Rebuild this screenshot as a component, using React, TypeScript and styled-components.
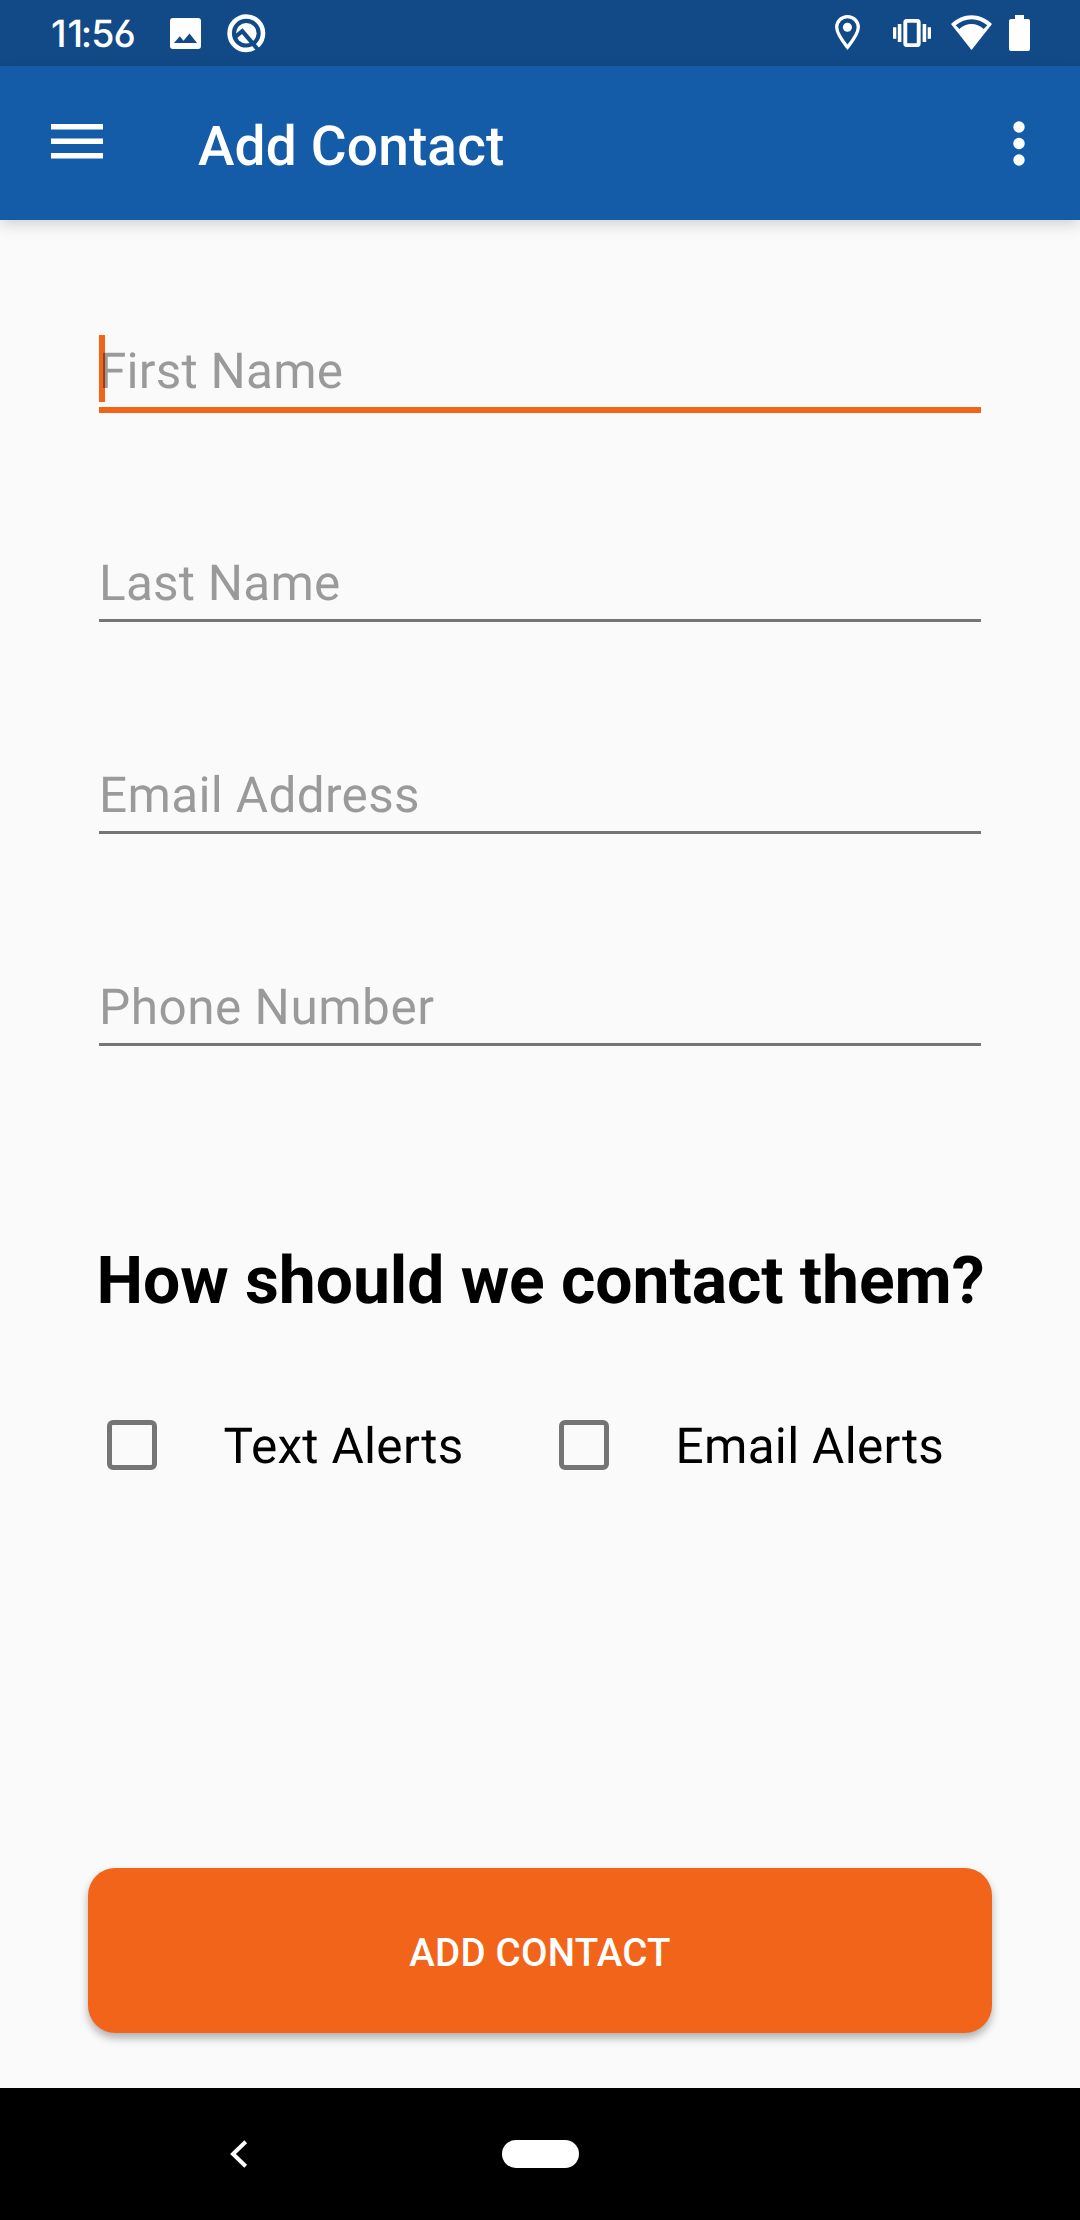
import React from "react";
import styled, { createGlobalStyle } from "styled-components";

const GlobalStyle = createGlobalStyle`
  * { box-sizing: border-box; }
  body {
    margin: 0;
    background: #fafafa;
    font-family: Roboto, "Noto Sans", sans-serif;
    text-rendering: geometricPrecision;
  }
`;

const Screen = styled.div`
  display: flex;
  flex-direction: column;
  width: 1080px;
  height: 2220px;
  overflow: hidden;
  background: #fafafa;
  color: #000;
`;

const StatusBar = styled.header`
  display: flex;
  align-items: center;
  flex: none;
  height: 66px;
  padding: 0 50px 0 51px;
  background: #114a87;
  color: #fff;
`;

const Clock = styled.div`
  width: 119px;
  padding-top: 2px;
  font: 500 37.5px/45px Inter, Roboto, sans-serif;
  font-feature-settings: "cv03", "calt" 0;
  white-space: nowrap;
`;

const Digit = styled.span<{ $tracking: number }>`
  letter-spacing: ${(p) => p.$tracking}px;
`;

const StatusIcon = styled.svg<{ $gap?: number }>`
  display: block;
  flex: none;
  margin-left: ${(p) => p.$gap ?? 0}px;
`;

const Spacer = styled.div`
  flex: 1;
`;

const AppBar = styled.div`
  display: flex;
  align-items: center;
  flex: none;
  height: 154px;
  padding: 0 55px 0 51px;
  background: #155ca8;
  color: #fff;
  box-shadow: 0 4px 14px rgba(0, 0, 0, 0.17);
`;

const IconButton = styled.button`
  display: flex;
  padding: 0;
  border: 0;
  background: none;
  color: inherit;
`;

const Title = styled.h1`
  flex: 1;
  margin: 0 0 0 95px;
  padding-top: 7px;
  font-size: 55px;
  line-height: 64px;
  font-weight: 500;
  letter-spacing: 0.15px;
`;

const Form = styled.main`
  display: flex;
  flex-direction: column;
  flex: 1;
  padding: 115px 88px 55px;
`;

const Fields = styled.div`
  display: flex;
  flex-direction: column;
  gap: 134px;
  padding: 0 11px;
`;

const Field = styled.div<{ $focused?: boolean }>`
  position: relative;
  height: 78px;
  padding-top: 8px;
  border-bottom: ${(p) => (p.$focused ? "6px solid #f26419" : "0 solid")};

  &::after {
    content: "";
    display: ${(p) => (p.$focused ? "none" : "block")};
    margin-top: 6.3px;
    height: 2.75px;
    background: #757575;
  }
`;

const Hint = styled.span<{ $tracking: number }>`
  position: relative;
  display: block;
  font-size: 49.5px;
  line-height: 58px;
  letter-spacing: ${(p) => p.$tracking}px;
  color: rgba(0, 0, 0, 0.385);
`;

const Caret = styled.i`
  position: absolute;
  left: 0;
  top: 0;
  width: 6px;
  height: 67px;
  background: #f26419;
`;

const Question = styled.h2`
  margin: 194px 0 0;
  padding-left: 1px;
  font-size: 66px;
  line-height: 78px;
  font-weight: 700;
  letter-spacing: -0.07px;
  text-align: center;
  white-space: nowrap;
`;

const Options = styled.div`
  display: grid;
  grid-template-columns: 1fr 1fr;
  margin-top: 93px;
`;

const Option = styled.label`
  display: flex;
  align-items: center;
  gap: 66.5px;
  padding-left: 19px;
  font-size: 49.5px;
  line-height: 58px;
  letter-spacing: 0.3px;
  white-space: nowrap;
`;

const OptionText = styled.span`
  padding-top: 4px;
`;

const Box = styled.span`
  width: 50px;
  height: 50px;
  border: 5.5px solid #757575;
  border-radius: 6px;
`;

const SubmitButton = styled.button`
  height: 165px;
  margin-top: auto;
  padding: 3px 0 0;
  border: 0;
  border-radius: 27.5px;
  background: #f26419;
  color: #fff;
  font-family: inherit;
  font-size: 38.5px;
  font-weight: 500;
  letter-spacing: 0.25px;
  box-shadow: 0 5px 9px rgba(0, 0, 0, 0.3);
`;

const NavBar = styled.nav`
  display: grid;
  grid-template-columns: 230px 272px 77px;
  align-items: center;
  flex: none;
  height: 132px;
  background: #000;
  color: #fff;

  & > :first-child {
    grid-column: 2;
  }
`;

const HomePill = styled.span`
  height: 28px;
  border-radius: 14px;
  background: #fff;
`;

const fields = [
  { name: "First Name", tracking: 0.22 },
  { name: "Last Name", tracking: 0.22 },
  { name: "Email Address", tracking: 0.33 },
  { name: "Phone Number", tracking: 0.5 },
];
const options = ["Text Alerts", "Email Alerts"];

export default function App() {
  return (
    <Screen>
      <GlobalStyle />
      <StatusBar>
        <Clock>
          <Digit $tracking={0.8}>1</Digit>
          <Digit $tracking={-2.2}>1</Digit>
          <Digit $tracking={-1}>:</Digit>
          <Digit $tracking={-0.9}>56</Digit>
        </Clock>
        <StatusIcon width="31" height="31" viewBox="0 0 31 31">
          <path
            fill="#fff"
            fillRule="evenodd"
            d="M3 0h25A3 3 0 0 1 31 3v25a3 3 0 0 1-3 3H3A3 3 0 0 1 0 28V3A3 3 0 0 1 3 0zM4 25h23l-7.500-9.600-6 7.400-3.700-4.600z"
          />
        </StatusIcon>
        <StatusIcon $gap={26} width="39" height="39" viewBox="0 0 39 39">
          <circle cx="19.300" cy="19.200" r="16.700" fill="none" stroke="#fff" strokeWidth="4.600" />
          <circle cx="19.300" cy="19.200" r="10.300" fill="#fff" />
          <path d="M8.500 22.600l6.800-5.500L33 38" fill="none" stroke="#114a87" strokeWidth="4.200" />
        </StatusIcon>
        <Spacer />
        <StatusIcon width="25" height="37" viewBox="0 0 25 37">
          <path
            d="M12.500 1.700C6.400 1.700 1.700 6.400 1.700 12.300c0 6.600 6.500 14.500 10.800 20 4.300-5.500 10.800-13.400 10.800-20 0-5.900-4.700-10.600-10.800-10.600z"
            fill="none"
            stroke="#fff"
            strokeWidth="3.300"
          />
          <circle cx="12.400" cy="12.300" r="4.500" fill="#fff" />
        </StatusIcon>
        <StatusIcon $gap={33} width="38" height="28" viewBox="0 0 38 28">
          <rect x="12.300" y="1.900" width="13.400" height="24.200" rx="1.200" fill="none" stroke="#fff" strokeWidth="3.900" />
          <path fill="#fff" d="M0 8.300h3.300v11.400H0zM4.800 5h3.600v18H4.800zM29.600 5h3.600v18h-3.600zM34.700 8.300H38v11.400h-3.300z" />
        </StatusIcon>
        <StatusIcon $gap={20} width="42" height="37" viewBox="0 0 42 37">
          <path fill="#fff" d="M0 9C12-2.700 29-2.700 41 9L20.500 35z" />
          <path fill="#114a87" d="M4.700 10.300c9.600-8 22-8 31.600 0l-3.600 3.600c-7.300-6.600-17.100-6.600-24.400 0z" />
        </StatusIcon>
        <StatusIcon $gap={16} width="21" height="36" viewBox="0 0 21 36">
          <path
            fill="#fff"
            d="M6 0h9v4h4a2 2 0 0 1 2 2v28a2 2 0 0 1-2 2H2a2 2 0 0 1-2-2V6a2 2 0 0 1 2-2h4z"
          />
        </StatusIcon>
      </StatusBar>
      <AppBar>
        <IconButton aria-label="Open menu">
          <svg width="52" height="38" viewBox="0 0 52 38">
            <path fill="#fff" d="M0 0h52v5.500H0zM0 14.500h52V20H0zM0 29h52v5.500H0z" />
          </svg>
        </IconButton>
        <Title>Add Contact</Title>
        <IconButton aria-label="More options">
          <svg width="12" height="45" viewBox="0 0 12 45">
            <circle cx="6" cy="6" r="5.700" fill="#fff" />
            <circle cx="6" cy="22.500" r="5.700" fill="#fff" />
            <circle cx="6" cy="39" r="5.700" fill="#fff" />
          </svg>
        </IconButton>
      </AppBar>
      <Form>
        <Fields>
          {fields.map(({ name, tracking }, i) => (
            <Field key={name} $focused={i === 0}>
              {i === 0 && <Caret />}
              <Hint $tracking={tracking}>{name}</Hint>
            </Field>
          ))}
        </Fields>
        <Question>How should we contact them?</Question>
        <Options>
          {options.map((name) => (
            <Option key={name}>
              <Box />
              <OptionText>{name}</OptionText>
            </Option>
          ))}
        </Options>
        <SubmitButton>ADD CONTACT</SubmitButton>
      </Form>
      <NavBar>
        <svg width="18" height="28" viewBox="0 0 18 28">
          <path d="M15.700 1.700L3 14l12.700 12.300" fill="none" stroke="#fff" strokeWidth="4" />
        </svg>
        <HomePill />
      </NavBar>
    </Screen>
  );
}
